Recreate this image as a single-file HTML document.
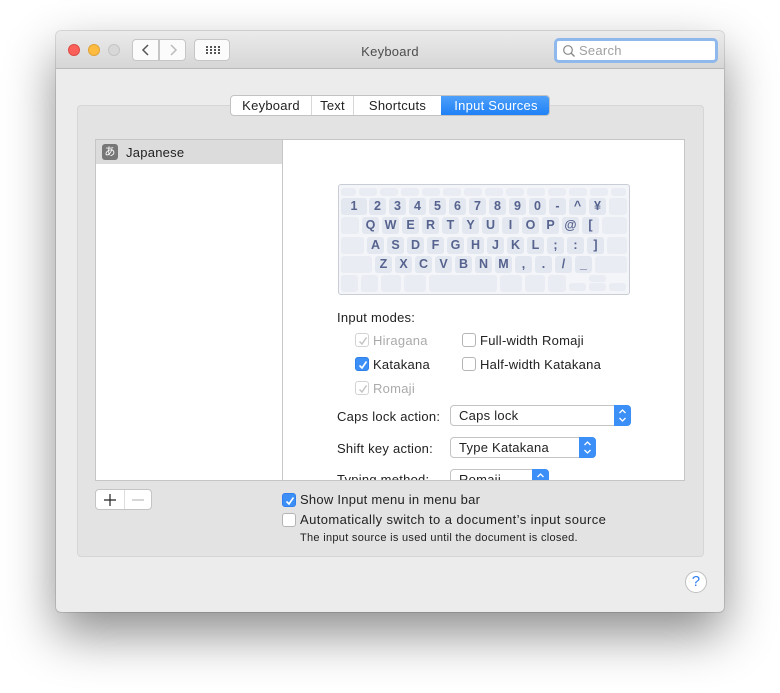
<!DOCTYPE html>
<html><head><meta charset="utf-8"><style>
*{box-sizing:border-box;margin:0;padding:0}
body{width:780px;height:693px;background:#fff;position:relative;overflow:hidden;font-family:"Liberation Sans","Noto Sans CJK JP",sans-serif;font-size:13px;color:#222;letter-spacing:.25px}
.a{position:absolute}
#win{left:56px;top:31px;width:668px;height:581px;background:#ececec;border-radius:5px;box-shadow:0 22px 50px rgba(0,0,0,.45),0 0 0 1px rgba(0,0,0,.12)}
#tb{left:0;top:0;width:668px;height:38px;background:linear-gradient(#ebebeb,#d6d6d6);border-bottom:1px solid #b9b9b9;border-radius:5px 5px 0 0}
.dot{width:12px;height:12px;border-radius:50%;top:13px}
.btn{background:#fbfbfb;border:1px solid #c6c6c6;border-radius:4px;height:22px;top:8px}
.k{position:absolute;background:#e3e7ef;border-radius:3px;color:#56638f;font-weight:bold;font-size:12.5px;text-align:center;line-height:17px;height:17px;width:17px;letter-spacing:0}
.b{position:absolute;background:#e9ecf2;border-radius:3px}
.cb{position:absolute;width:14px;height:14px;border:1px solid #b5b5b5;border-radius:3px;background:#fff}
.cb.on{background:#3b8ff7;border-color:#2f80ea}
.cb.dis{border-color:#d3d3d3}
.cb svg{position:absolute;left:1px;top:1px}
.pop{position:absolute;height:21px;background:#fff;border:1px solid #c4c4c4;border-radius:4px;padding-left:8px;line-height:19px}
.pop .ar{position:absolute;right:-1px;top:-1px;width:17px;height:21px;background:#3b8ff7;border-radius:0 4px 4px 0}
</style></head><body>
<div id="win" class="a">
 <div id="tb" class="a">
  <div class="a dot" style="left:12px;background:#fc605b;border:1px solid #de4a44"></div>
  <div class="a dot" style="left:32px;background:#fdbc40;border:1px solid #dea236"></div>
  <div class="a dot" style="left:52px;background:#d8d8d8;border:1px solid #c4c4c4"></div>
  <div class="a btn" style="left:76px;width:27px;border-radius:4px 0 0 4px"><svg width="27" height="20"><path d="M15 5 L10 10 L15 15" stroke="#555" stroke-width="1.5" fill="none"/></svg></div>
  <div class="a btn" style="left:103px;width:27px;border-radius:0 4px 4px 0"><svg width="27" height="20"><path d="M11 5 L16 10 L11 15" stroke="#bbb" stroke-width="1.5" fill="none"/></svg></div>
  <div class="a btn" style="left:138px;width:36px"><svg width="36" height="20"><g fill="#555"><rect x="11" y="6" width="2" height="2"/><rect x="15" y="6" width="2" height="2"/><rect x="19" y="6" width="2" height="2"/><rect x="23" y="6" width="2" height="2"/><rect x="11" y="9" width="2" height="2"/><rect x="15" y="9" width="2" height="2"/><rect x="19" y="9" width="2" height="2"/><rect x="23" y="9" width="2" height="2"/><rect x="11" y="12" width="2" height="2"/><rect x="15" y="12" width="2" height="2"/><rect x="19" y="12" width="2" height="2"/><rect x="23" y="12" width="2" height="2"/></g></svg></div>
  <div class="a" style="left:0;width:668px;top:13px;text-align:center;color:#4d4d4d;font-size:13px">Keyboard</div>
  <div class="a" style="left:498px;top:7px;width:164px;height:25px;border:3px solid #8fb8ec;border-radius:5px;background:#fff"><svg class="a" style="left:5px;top:3px" width="14" height="14"><circle cx="6" cy="6" r="4.3" stroke="#888" stroke-width="1.2" fill="none"/><path d="M9 9 L12.5 12.5" stroke="#888" stroke-width="1.4"/></svg><span class="a" style="left:22px;top:2px;color:#a0a0a0">Search</span></div>
 </div>
 <div class="a" style="left:21px;top:74px;width:627px;height:452px;background:#e3e3e3;border:1px solid #d6d6d6;border-radius:4px"></div>
 <div class="a" style="left:174px;top:64px;width:320px;height:21px;background:#fff;border:1px solid #c2c2c2;border-radius:4px;overflow:hidden;line-height:19px">
  <span class="a" style="left:0;width:81px;text-align:center;border-right:1px solid #d8d8d8">Keyboard</span>
  <span class="a" style="left:81px;width:42px;text-align:center;border-right:1px solid #d8d8d8">Text</span>
  <span class="a" style="left:123px;width:87px;text-align:center">Shortcuts</span>
  <span class="a" style="left:210px;width:110px;text-align:center;background:linear-gradient(#4ea0fa,#1a7ef5);color:#fff;height:21px">Input Sources</span>
 </div>
 <div class="a" style="left:39px;top:108px;width:590px;height:342px;background:#fff;border:1px solid #c6c6c6"></div>
 <div class="a" style="left:226px;top:108px;width:1px;height:342px;background:#c6c6c6"></div>
 <div class="a" style="left:40px;top:109px;width:186px;height:24px;background:#dcdcdc"></div>
 <div class="a" style="left:46px;top:113px;width:16px;height:16px;background:#777;border-radius:3px;color:#fff;font-size:11px;text-align:center;line-height:16px">あ</div>
 <div class="a" style="left:70px;top:114px">Japanese</div>
 <div class="a" style="left:39px;top:458px;width:57px;height:21px;background:#fff;border:1px solid #c4c4c4;border-radius:4px"><div class="a" style="left:28px;top:0;width:1px;height:19px;background:#ddd"></div><svg class="a" style="left:7px;top:3px" width="14" height="14"><path d="M7 1V13M1 7H13" stroke="#222" stroke-width="1.2"/></svg><svg class="a" style="left:35px;top:3px" width="14" height="14"><path d="M1 7H13" stroke="#bbb" stroke-width="1.2"/></svg></div>
 <div class="a" style="left:629px;top:540px;width:22px;height:22px;border-radius:50%;background:#fff;border:1px solid #c0c0c0;color:#2f7ff0;font-size:15px;text-align:center;line-height:20px">?</div>
</div>
<div class="a" style="left:338px;top:184px;width:292px;height:111px;background:#f3f5f9;border:1px solid #c8cdd6;border-radius:3px"></div>
<div class="a" style="left:0;top:0">
<div class="b" style="left:341px;top:188px;width:15px;height:8px"></div><div class="b" style="left:359px;top:188px;width:18px;height:8px"></div><div class="b" style="left:380px;top:188px;width:18px;height:8px"></div><div class="b" style="left:401px;top:188px;width:18px;height:8px"></div><div class="b" style="left:422px;top:188px;width:18px;height:8px"></div><div class="b" style="left:443px;top:188px;width:18px;height:8px"></div><div class="b" style="left:464px;top:188px;width:18px;height:8px"></div><div class="b" style="left:485px;top:188px;width:18px;height:8px"></div><div class="b" style="left:506px;top:188px;width:18px;height:8px"></div><div class="b" style="left:527px;top:188px;width:18px;height:8px"></div><div class="b" style="left:548px;top:188px;width:18px;height:8px"></div><div class="b" style="left:569px;top:188px;width:18px;height:8px"></div><div class="b" style="left:590px;top:188px;width:18px;height:8px"></div><div class="b" style="left:611px;top:188px;width:15px;height:8px"></div>
<div class="k" style="left:341px;top:198px;width:26px">1</div><div class="k" style="left:369px;top:198px">2</div><div class="k" style="left:389px;top:198px">3</div><div class="k" style="left:409px;top:198px">4</div><div class="k" style="left:429px;top:198px">5</div><div class="k" style="left:449px;top:198px">6</div><div class="k" style="left:469px;top:198px">7</div><div class="k" style="left:489px;top:198px">8</div><div class="k" style="left:509px;top:198px">9</div><div class="k" style="left:529px;top:198px">0</div><div class="k" style="left:549px;top:198px">-</div><div class="k" style="left:569px;top:198px">^</div><div class="k" style="left:589px;top:198px">¥</div><div class="b" style="left:609px;top:198px;width:18px;height:17px"></div>
<div class="b" style="left:341px;top:217px;width:18px;height:17px"></div><div class="k" style="left:362px;top:217px">Q</div><div class="k" style="left:382px;top:217px">W</div><div class="k" style="left:402px;top:217px">E</div><div class="k" style="left:422px;top:217px">R</div><div class="k" style="left:442px;top:217px">T</div><div class="k" style="left:462px;top:217px">Y</div><div class="k" style="left:482px;top:217px">U</div><div class="k" style="left:502px;top:217px">I</div><div class="k" style="left:522px;top:217px">O</div><div class="k" style="left:542px;top:217px">P</div><div class="k" style="left:562px;top:217px">@</div><div class="k" style="left:582px;top:217px">[</div><div class="b" style="left:602px;top:217px;width:25px;height:17px"></div>
<div class="b" style="left:341px;top:237px;width:23px;height:17px"></div><div class="k" style="left:367px;top:237px">A</div><div class="k" style="left:387px;top:237px">S</div><div class="k" style="left:407px;top:237px">D</div><div class="k" style="left:427px;top:237px">F</div><div class="k" style="left:447px;top:237px">G</div><div class="k" style="left:467px;top:237px">H</div><div class="k" style="left:487px;top:237px">J</div><div class="k" style="left:507px;top:237px">K</div><div class="k" style="left:527px;top:237px">L</div><div class="k" style="left:547px;top:237px">;</div><div class="k" style="left:567px;top:237px">:</div><div class="k" style="left:587px;top:237px">]</div><div class="b" style="left:607px;top:237px;width:20px;height:17px"></div>
<div class="b" style="left:341px;top:256px;width:31px;height:17px"></div><div class="k" style="left:375px;top:256px">Z</div><div class="k" style="left:395px;top:256px">X</div><div class="k" style="left:415px;top:256px">C</div><div class="k" style="left:435px;top:256px">V</div><div class="k" style="left:455px;top:256px">B</div><div class="k" style="left:475px;top:256px">N</div><div class="k" style="left:495px;top:256px">M</div><div class="k" style="left:515px;top:256px">,</div><div class="k" style="left:535px;top:256px">.</div><div class="k" style="left:555px;top:256px">/</div><div class="k" style="left:575px;top:256px">_</div><div class="b" style="left:595px;top:256px;width:32px;height:17px"></div>
<div class="b" style="left:341px;top:275px;width:17px;height:17px"></div><div class="b" style="left:361px;top:275px;width:17px;height:17px"></div><div class="b" style="left:381px;top:275px;width:20px;height:17px"></div><div class="b" style="left:404px;top:275px;width:22px;height:17px"></div><div class="b" style="left:429px;top:275px;width:68px;height:17px"></div><div class="b" style="left:500px;top:275px;width:22px;height:17px"></div><div class="b" style="left:525px;top:275px;width:20px;height:17px"></div><div class="b" style="left:548px;top:275px;width:18px;height:17px"></div><div class="b" style="left:569px;top:283px;width:17px;height:8px"></div><div class="b" style="left:589px;top:275px;width:17px;height:7px"></div><div class="b" style="left:589px;top:283px;width:17px;height:8px"></div><div class="b" style="left:609px;top:283px;width:17px;height:8px"></div>
</div>
<div class="a" style="left:337px;top:310px">Input modes:</div>
<div class="cb dis" style="left:355px;top:333px"><svg width="12" height="12"><path d="M2.5 6.5 L5 9 L9.5 2.5" stroke="#c4c4c4" stroke-width="1.5" fill="none"/></svg></div><div class="a" style="left:373px;top:333px;color:#aaa">Hiragana</div>
<div class="cb" style="left:462px;top:333px"></div><div class="a" style="left:480px;top:333px">Full-width Romaji</div>
<div class="cb on" style="left:355px;top:357px"><svg width="12" height="12"><path d="M2.5 6.5 L5 9 L9.5 2.5" stroke="#fff" stroke-width="1.6" fill="none"/></svg></div><div class="a" style="left:373px;top:357px">Katakana</div>
<div class="cb" style="left:462px;top:357px"></div><div class="a" style="left:480px;top:357px">Half-width Katakana</div>
<div class="cb dis" style="left:355px;top:381px"><svg width="12" height="12"><path d="M2.5 6.5 L5 9 L9.5 2.5" stroke="#c4c4c4" stroke-width="1.5" fill="none"/></svg></div><div class="a" style="left:373px;top:381px;color:#aaa">Romaji</div>
<div class="a" style="left:337px;top:409px">Caps lock action:</div>
<div class="pop" style="left:450px;top:405px;width:181px">Caps lock<div class="ar"><svg width="17" height="21"><path d="M5.5 8 L8.5 5 L11.5 8 M5.5 13 L8.5 16 L11.5 13" stroke="#fff" stroke-width="1.3" fill="none"/></svg></div></div>
<div class="a" style="left:337px;top:441px">Shift key action:</div>
<div class="pop" style="left:450px;top:437px;width:146px">Type Katakana<div class="ar"><svg width="17" height="21"><path d="M5.5 8 L8.5 5 L11.5 8 M5.5 13 L8.5 16 L11.5 13" stroke="#fff" stroke-width="1.3" fill="none"/></svg></div></div>
<div class="a" style="left:283px;top:469px;width:400px;height:11px;overflow:hidden">
 <div class="a" style="left:54px;top:3px">Typing method:</div>
 <div class="pop" style="left:167px;top:0;width:99px">Romaji<div class="ar"><svg width="17" height="21"><path d="M5.5 8 L8.5 5 L11.5 8" stroke="#fff" stroke-width="1.3" fill="none"/></svg></div></div>
</div>
<div class="cb on" style="left:282px;top:493px"><svg width="12" height="12"><path d="M2.5 6.5 L5 9 L9.5 2.5" stroke="#fff" stroke-width="1.6" fill="none"/></svg></div><div class="a" style="left:300px;top:492px">Show Input menu in menu bar</div>
<div class="cb" style="left:282px;top:513px"></div><div class="a" style="left:300px;top:512px;letter-spacing:.4px">Automatically switch to a document’s input source</div>
<div class="a" style="left:300px;top:532px;font-size:11px;letter-spacing:.3px">The input source is used until the document is closed.</div>
</body></html>
